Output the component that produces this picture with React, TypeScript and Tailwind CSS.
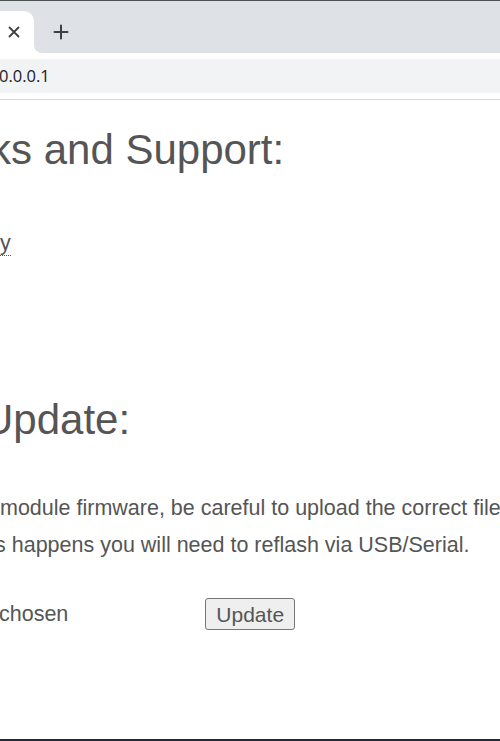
import React from "react";

export default function App() {
  const font = { fontFamily: '"Liberation Sans", Arial, sans-serif' };
  return (
    <div className="w-[500px] h-[741px] overflow-hidden bg-white flex flex-col relative">
      {/* top border */}
      <div className="h-[1px] bg-[#4d5156] shrink-0" />
      {/* tab bar */}
      <div className="h-[52px] bg-[#dee1e6] flex items-end shrink-0 relative">
        <div className="relative w-[34px] h-[42px] bg-white rounded-tr-[10px] flex items-center justify-center">
          <svg width="12" height="12" viewBox="0 0 12 12" className="ml-[-6px]">
            <path d="M1.5 1.5 L10.5 10.5 M10.5 1.5 L1.5 10.5" stroke="#3c4043" strokeWidth="1.8" strokeLinecap="round" />
          </svg>
          <div className="absolute right-[-8px] bottom-0 w-[8px] h-[8px] bg-white">
            <div className="w-[8px] h-[8px] bg-[#dee1e6] rounded-bl-[8px]" />
          </div>
        </div>
        <div className="h-[42px] flex items-center ml-[19px]">
          <svg width="16" height="16" viewBox="0 0 16 16">
            <path d="M8 1.5 V14.5 M1.5 8 H14.5" stroke="#3c4043" strokeWidth="2" strokeLinecap="round" />
          </svg>
        </div>
      </div>
      {/* toolbar */}
      <div className="h-[46px] bg-white flex flex-col shrink-0">
        <div className="mt-[6px] h-[34px] bg-[#f1f3f4] flex items-center">
          <span className="text-[16.5px] text-[#202124] ml-[-1px]" style={{ fontFamily: '"Open Sans", "Noto Sans", sans-serif' }}>
            0.0.0.1
          </span>
        </div>
      </div>
      <div className="h-[1px] bg-[#d6d6d6] shrink-0" />
      {/* page content */}
      <div className="flex-1 flex flex-col text-[#555]" style={font}>
        <div className="mt-[26px] text-[42px] leading-[48px] whitespace-nowrap ml-[-10px]">ks and Support:</div>
        <div className="mt-[54px] text-[21.5px] leading-[30px] whitespace-nowrap">
          <span className="border-b border-dotted border-[#555]">y</span>
        </div>
        <div className="mt-[138px] text-[42px] leading-[48px] whitespace-nowrap ml-[-17px]">Update:</div>
        <div className="mt-[46px] text-[21.5px] leading-[37px] whitespace-nowrap">
          <div className="ml-[0px]">module firmware, be careful to upload the correct file</div>
          <div className="ml-[-5px]">s happens you will need to reflash via USB/Serial.</div>
        </div>
        <div className="mt-[34px] flex items-center text-[21.5px] whitespace-nowrap">
          <span className="ml-[-1px]">chosen</span>
          <button className="ml-[137px] h-[32px] px-[10px] bg-[#efefef] border border-[#767676] rounded-[3px] text-[21px] text-[#555] leading-none" style={font}>
            Update
          </button>
        </div>
      </div>
      <div className="h-[2px] bg-[#1f2d3a] shrink-0" />
    </div>
  );
}
